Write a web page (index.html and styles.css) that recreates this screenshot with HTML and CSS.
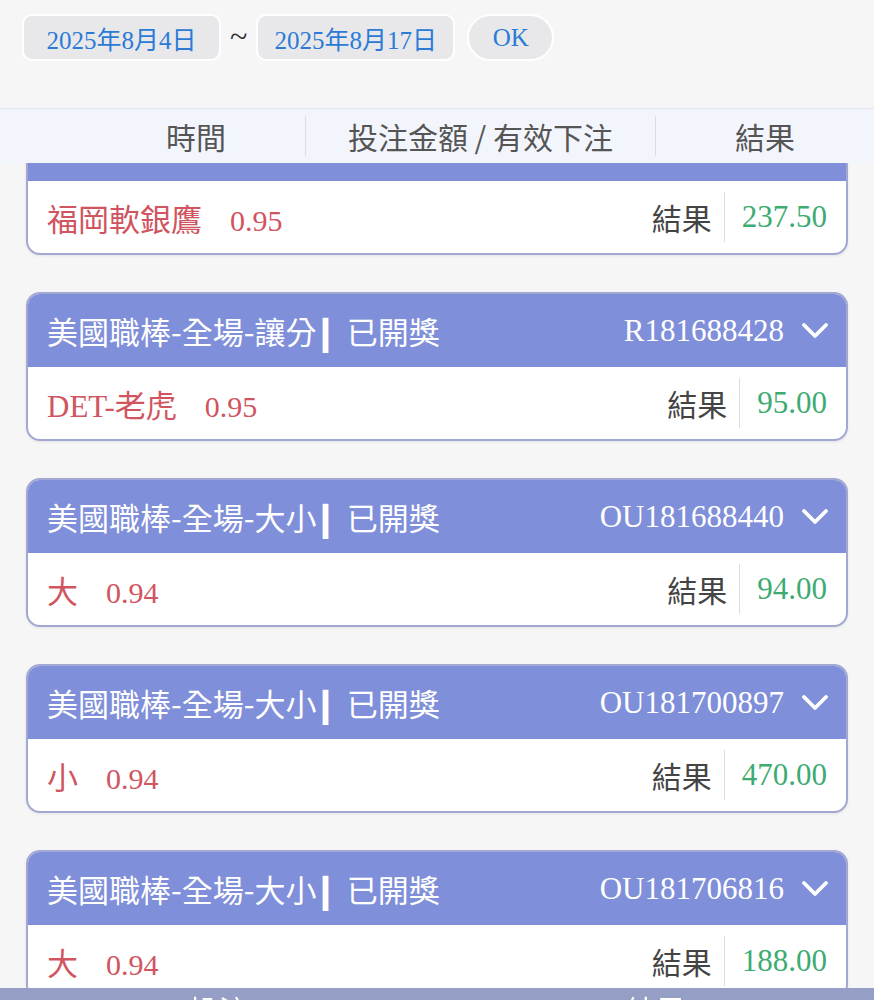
FILE: index.html
```html
<!DOCTYPE html>
<html lang="zh-Hant">
<head>
    <meta charset="UTF-8">
    <meta name="viewport" content="width=device-width, initial-scale=1.0">
    <title>投注紀錄</title>
    <link rel="stylesheet" href="styles.css">
</head>
<body>
    <div class="filter">
        <span class="date-pill">2025年8月4日</span>
        <span class="tilde">~</span>
        <span class="date-pill">2025年8月17日</span>
        <button class="ok-btn">OK</button>
    </div>

    <div class="table-head">
        <span class="col col-time">時間</span>
        <span class="col col-amount">投注金額 / 有效下注</span>
        <span class="col col-result">結果</span>
    </div>

    <div class="list">
        <!-- scrolled up under the table head, only the bottom strip of its head shows -->
        <div class="card card-cut">
            <div class="card-head"></div>
            <div class="card-body">
                <span class="pick">福岡軟銀鷹<span class="odds">0.95</span></span>
                <span class="res"><span class="res-label">結果</span><span class="res-value">237.50</span></span>
            </div>
        </div>

        <div class="card">
            <div class="card-head">
                <span class="title">美國職棒-全場-讓分<b class="sep">|</b>已開獎</span>
                <span class="order">R181688428 <svg class="chev" viewBox="0 0 26 16"><polyline points="2,2 13,13 24,2"/></svg></span>
            </div>
            <div class="card-body">
                <span class="pick">DET-老虎<span class="odds">0.95</span></span>
                <span class="res"><span class="res-label">結果</span><span class="res-value">95.00</span></span>
            </div>
        </div>

        <div class="card">
            <div class="card-head">
                <span class="title">美國職棒-全場-大小<b class="sep">|</b>已開獎</span>
                <span class="order">OU181688440 <svg class="chev" viewBox="0 0 26 16"><polyline points="2,2 13,13 24,2"/></svg></span>
            </div>
            <div class="card-body">
                <span class="pick">大<span class="odds">0.94</span></span>
                <span class="res"><span class="res-label">結果</span><span class="res-value">94.00</span></span>
            </div>
        </div>

        <div class="card">
            <div class="card-head">
                <span class="title">美國職棒-全場-大小<b class="sep">|</b>已開獎</span>
                <span class="order">OU181700897 <svg class="chev" viewBox="0 0 26 16"><polyline points="2,2 13,13 24,2"/></svg></span>
            </div>
            <div class="card-body">
                <span class="pick">小<span class="odds">0.94</span></span>
                <span class="res"><span class="res-label">結果</span><span class="res-value">470.00</span></span>
            </div>
        </div>

        <div class="card">
            <div class="card-head">
                <span class="title">美國職棒-全場-大小<b class="sep">|</b>已開獎</span>
                <span class="order">OU181706816 <svg class="chev" viewBox="0 0 26 16"><polyline points="2,2 13,13 24,2"/></svg></span>
            </div>
            <div class="card-body">
                <span class="pick">大<span class="odds">0.94</span></span>
                <span class="res"><span class="res-label">結果</span><span class="res-value">188.00</span></span>
            </div>
        </div>
    </div>

    <div class="summary-bar">
        <span>投注</span>
        <span>結果</span>
    </div>
</body>
</html>
```

FILE: styles.css
```css
:root {
    --background: #f6f6f7;
    --head-bg: #f3f5fc;
    --card-head: #7f8fd9;
    --card-border: #a3a8d2;
    --pill: #e8e8eb;
    --blue: #2b7bd6;
    --red: #d05560;
    --green: #3dab72;
    --text: #444;
    --line: #dcdde3;
    --bar: #959ec5;
}

* {
    margin: 0;
    padding: 0;
    box-sizing: border-box;
}

body {
    background-color: var(--background);
    color: var(--text);
    font-family: "Noto Sans CJK TC", "Noto Sans", sans-serif;
    height: 1000px;
    overflow: hidden;
}

.filter {
    display: flex;
    align-items: flex-start;
    gap: 9px;
    padding: 14px 22px 0;
    height: 108px;
}

.date-pill,
.ok-btn {
    display: inline-flex;
    align-items: center;
    justify-content: center;
    height: 47px;
    background: var(--pill);
    border: 2px solid #fff;
    border-radius: 10px;
    color: var(--blue);
    font-family: "Liberation Serif", "Noto Sans CJK TC", serif;
    font-size: 25px;
}

.date-pill {
    width: 199px;
}

.tilde {
    font-family: "Liberation Serif", serif;
    font-size: 32px;
    color: #333;
    line-height: 44px;
}

.ok-btn {
    width: 87px;
    border-radius: 24px;
    margin-left: 3px;
}

.table-head {
    display: grid;
    grid-template-columns: 87px 218px 350px 1fr;
    align-items: center;
    height: 55px;
    background: var(--head-bg);
    border-top: 1px solid #e2e5ef;
}

.col {
    font-size: 30px;
    color: #555;
    text-align: center;
    line-height: 40px;
}

.col-time {
    grid-column: 2;
}

.col-amount,
.col-result {
    border-left: 1px solid var(--line);
}

.list {
    display: flex;
    flex-direction: column;
    gap: 37px;
    padding: 0 26px;
    height: 837px;
    overflow: hidden;
}

.card {
    flex-shrink: 0;
    background: #fff;
    border: 2px solid var(--card-border);
    border-radius: 14px;
    overflow: hidden;
    box-shadow: 0 1px 3px rgb(0 0 0 / 0.08);
}

.card-cut {
    margin-top: -57px;
}

.card-head {
    display: flex;
    justify-content: space-between;
    align-items: center;
    height: 73px;
    padding: 0 18px 0 19px;
    background: var(--card-head);
    color: #fff;
}

.title {
    display: flex;
    align-items: center;
    font-size: 31px;
}

.sep {
    display: inline-block;
    font-weight: 700;
    transform: scaleX(1.9);
    margin: 0 17px 0 4px;
}

.order {
    display: flex;
    align-items: center;
    gap: 18px;
    font-family: "Liberation Serif", serif;
    font-size: 31px;
}

.chev {
    width: 26px;
    height: 16px;
}

.chev polyline {
    fill: none;
    stroke: #fff;
    stroke-width: 3.8;
    stroke-linecap: round;
    stroke-linejoin: round;
}

.card-body {
    display: flex;
    justify-content: space-between;
    align-items: center;
    height: 72px;
    padding: 0 19px;
}

.pick {
    color: var(--red);
    font-size: 31px;
    font-family: "Liberation Serif", "Noto Sans CJK TC", serif;
}

.odds {
    margin-left: 28px;
    font-size: 30px;
}

.res {
    display: flex;
    align-items: center;
}

.res-label {
    font-size: 30px;
    color: var(--text);
    padding-right: 12px;
    border-right: 1px solid var(--line);
    line-height: 50px;
}

.res-value {
    font-family: "Liberation Serif", serif;
    font-size: 31px;
    color: var(--green);
    padding-left: 17px;
}

.summary-bar {
    position: fixed;
    left: 0;
    right: 0;
    top: 988px;
    height: 60px;
    background: var(--bar);
    display: grid;
    grid-template-columns: 1fr 1fr;
    padding-top: 4px;
    color: #fff;
    font-size: 30px;
    line-height: 34px;
    text-align: center;
}
```
